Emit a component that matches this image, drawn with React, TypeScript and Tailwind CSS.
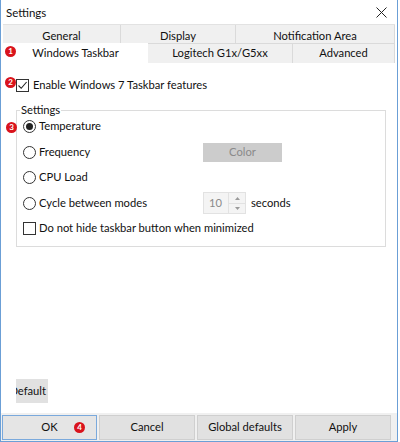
import React from 'react';

const font = { fontFamily: 'Lato, "Segoe UI", Arial, sans-serif' };

function Badge({ n, className }: { n: number; className: string }) {
  return (
    <div
      className={`absolute w-[11px] h-[11px] rounded-full bg-[#d9131c] text-white text-[8px] font-bold leading-[11px] text-center ${className}`}
    >
      {n}
    </div>
  );
}

function Radio({ checked }: { checked?: boolean }) {
  return (
    <div className="w-[13px] h-[13px] rounded-full border border-[#333] bg-white flex items-center justify-center">
      {checked && <div className="w-[7px] h-[7px] rounded-full bg-[#222]" />}
    </div>
  );
}

function Check({ checked }: { checked?: boolean }) {
  return (
    <div className="w-[13px] h-[13px] border border-[#333] bg-white flex items-center justify-center">
      {checked && (
        <svg width="11" height="11" viewBox="0 0 11 11">
          <path d="M1.5 5.5 L4.2 8.3 L9.6 2" fill="none" stroke="#222" strokeWidth="1.1" />
        </svg>
      )}
    </div>
  );
}

function Tab({ label, w, active, top }: { label: string; w: string; active?: boolean; top?: boolean }) {
  return (
    <div
      className={`${w} flex items-center justify-center border-r border-[#dadada] ${
        active ? 'bg-white h-[21px] -mt-[1px] border-r-0' : top ? 'h-[18px] pt-[5px]' : 'h-[19px]'
      }`}
    >
      {label}
    </div>
  );
}

export default function App() {
  return (
    <div className="w-[400px] h-[442px] bg-white text-[11.2px] text-[#111]" style={font}>
      <div className="relative w-[398px] h-[442px] border-l-[1px] border-r-[1px] border-b-[1px] border-[#6b9fd6] flex flex-col">
        {/* title */}
        <div className="h-[24px] flex items-center justify-between pl-[5px] pr-[10px] pt-[1px]">
          <span className="text-[11.5px]">Settings</span>
          <svg width="11" height="11" viewBox="0 0 11 11">
            <path d="M0.5 0.5 L10.5 10.5 M10.5 0.5 L0.5 10.5" stroke="#222" strokeWidth="1" />
          </svg>
        </div>

        {/* tabs */}
        <div className="ml-[2px] mr-[2px] bg-[#f0f0f0] border-t border-[#e2e2e2]">
          <div className="flex border-b border-[#dadada]">
            <Tab label="General" w="w-[118px]" top />
            <Tab label="Display" w="w-[115px]" top />
            <Tab label="Notification Area" w="flex-1" top />
          </div>
          <div className="flex items-start h-[19px]">
            <Tab label="Windows Taskbar" w="w-[145px]" active />
            <Tab label="Logitech G1x/G5xx" w="w-[145px]" />
            <Tab label="Advanced" w="flex-1" />
          </div>
        </div>

        {/* panel */}
        <div className="flex-1 flex flex-col pl-[15px] pr-[11px] pt-[15px]">
          <div className="flex items-center gap-[4px] h-[14px]">
            <Check checked />
            <span>Enable Windows 7 Taskbar features</span>
          </div>

          <div className="relative mt-[18px] h-[137px] border border-[#dcdcdc]">
            <span className="absolute -top-[9px] left-[3px] bg-white px-[1px] leading-[16px]">Settings</span>
            <div className="flex flex-col pl-[6px] pt-[3px]">
              <div className="flex items-center gap-[3px] h-[25.5px]">
                <Radio checked />
                <span>Temperature</span>
              </div>
              <div className="flex items-center h-[25.5px]">
                <div className="flex items-center gap-[3px] w-[180px]">
                  <Radio />
                  <span>Frequency</span>
                </div>
                <div className="w-[79px] h-[19px] bg-[#cccccc] text-[#8a8a8a] flex items-center justify-center">
                  Color
                </div>
              </div>
              <div className="flex items-center gap-[3px] h-[25.5px]">
                <Radio />
                <span>CPU Load</span>
              </div>
              <div className="flex items-center h-[25.5px]">
                <div className="flex items-center gap-[3px] w-[180px]">
                  <Radio />
                  <span>Cycle between modes</span>
                </div>
                <div className="flex h-[22px] w-[43px] border border-[#e2e2e2] bg-[#f4f4f4]">
                  <div className="flex-1 flex items-center pl-[5px] text-[#8a8a8a]">10</div>
                  <div className="w-[17px] flex flex-col border-l border-[#e2e2e2]">
                    <div className="flex-1 flex items-center justify-center border-b border-[#e2e2e2]">
                      <svg width="5" height="3" viewBox="0 0 5 3"><path d="M0 3 L2.5 0 L5 3Z" fill="#9a9a9a" /></svg>
                    </div>
                    <div className="flex-1 flex items-center justify-center">
                      <svg width="5" height="3" viewBox="0 0 5 3"><path d="M0 0 L2.5 3 L5 0Z" fill="#9a9a9a" /></svg>
                    </div>
                  </div>
                </div>
                <span className="ml-[5px]">seconds</span>
              </div>
              <div className="flex items-center gap-[3px] h-[25.5px]">
                <Check />
                <span>Do not hide taskbar button when minimized</span>
              </div>
            </div>
          </div>

          <div className="mt-auto mb-[10px] w-[32px] h-[24px] bg-[#e1e1e1] overflow-hidden flex items-center justify-end pr-[2px]">
            <span className="whitespace-nowrap">Default</span>
          </div>
        </div>

        {/* bottom buttons */}
        <div className="h-[28px] bg-[#f0f0f0] flex items-start pt-[2px] pl-[1px] gap-[2px]">
          <div className="w-[95px] h-[25px] bg-[#e5e5e5] border border-[#7aa9dc] flex items-center justify-center">OK</div>
          <div className="w-[96px] h-[25px] bg-[#e1e1e1] border border-[#cfcfcf] flex items-center justify-center">Cancel</div>
          <div className="w-[96px] h-[25px] bg-[#e1e1e1] border border-[#cfcfcf] flex items-center justify-center">Global defaults</div>
          <div className="w-[96px] h-[25px] bg-[#e1e1e1] border border-[#cfcfcf] flex items-center justify-center">Apply</div>
        </div>

        <Badge n={1} className="left-[4px] top-[46px]" />
        <Badge n={2} className="left-[4px] top-[77px]" />
        <Badge n={3} className="left-[5px] top-[122px]" />
        <Badge n={4} className="left-[73px] top-[422px]" />
      </div>
    </div>
  );
}
